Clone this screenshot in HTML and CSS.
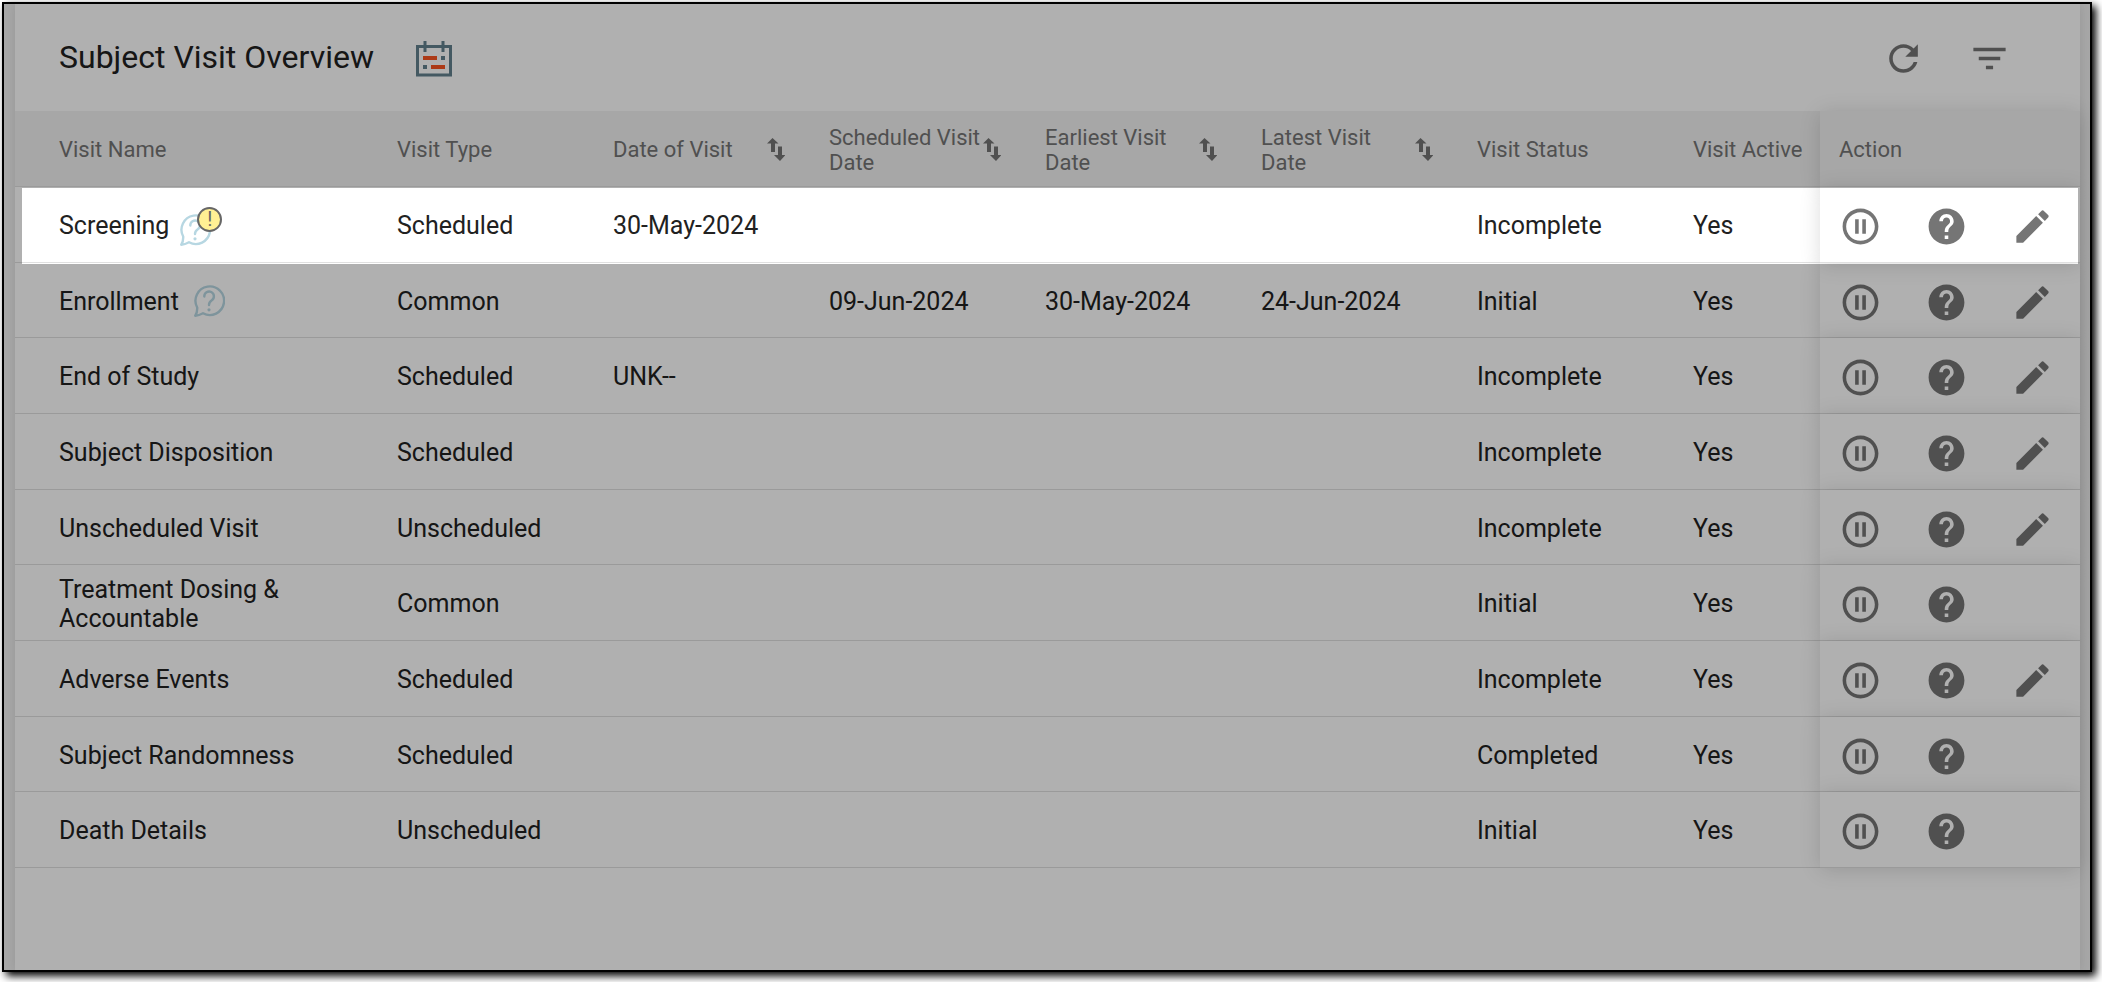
FILE: index.html
```html
<!DOCTYPE html>
<html lang="en">
<head>
    <meta charset="UTF-8">
    <meta name="viewport" content="width=device-width, initial-scale=1.0">
    <title>Subject Visit Overview</title>
    <link rel="stylesheet" href="styles.css">
</head>
<body>
    <!-- Shared icons -->
    <svg class="sprite" aria-hidden="true">
        <symbol id="icon-sort" viewBox="0 0 18 23"><path d="M5.500 0L0 5.500h4V14h4V5.500h3.500zM13 23l5.500-6H15V8.500h-4V17H7z"/></symbol>
        <symbol id="icon-pause" viewBox="0 0 24 24"><path d="M9 16h2V8H9v8zm3-14C6.48 2 2 6.48 2 12s4.48 10 10 10 10-4.48 10-10S17.52 2 12 2zm0 18c-4.41 0-8-3.59-8-8s3.59-8 8-8 8 3.59 8 8-3.59 8-8 8zm1-4h2V8h-2v8z"/></symbol>
        <symbol id="icon-help" viewBox="0 0 24 24"><path d="M12 2C6.48 2 2 6.48 2 12s4.48 10 10 10 10-4.48 10-10S17.52 2 12 2zm1 17h-2v-2h2v2zm2.07-7.75l-.9.92C13.45 12.9 13 13.5 13 15h-2v-.5c0-1.1.45-2.1 1.17-2.83l1.24-1.26c.37-.36.59-.86.59-1.41 0-1.1-.9-2-2-2s-2 .9-2 2H8c0-2.21 1.79-4 4-4s4 1.79 4 4c0 .88-.36 1.68-.93 2.25z"/></symbol>
        <symbol id="icon-edit" viewBox="0 0 24 24"><path d="M3 17.25V21h3.75L17.81 9.94l-3.75-3.75L3 17.25zM20.71 7.04c.39-.39.39-1.02 0-1.41l-2.34-2.34c-.39-.39-1.02-.39-1.41 0l-1.83 1.83 3.75 3.75 1.83-1.83z"/></symbol>
        <symbol id="icon-query" viewBox="0 0 32 32">
            <path d="M4.200 22.500Q4.500 27 2.300 30.700Q6 30.600 10 28.300A14.300 14.300 0 1 0 4.200 22.500Z" fill="none" stroke="#b7d7e2" stroke-width="2.400" stroke-linejoin="round"/>
            <path d="M11.300 11.500a4.800 4.800 0 1 1 7.500 3.800c-2 1.400-2.800 2.400-2.800 4.700" fill="none" stroke="#b7d7e2" stroke-width="2.400" stroke-linecap="round"/>
            <circle cx="16" cy="24.800" r="1.600" fill="#b7d7e2"/>
        </symbol>
    </svg>

    <main class="frame">
        <section class="panel">
            <header class="panel-header">
                <h1 class="title">Subject Visit Overview</h1>
                <button class="icon-btn" aria-label="Calendar">
                    <svg class="calendar" viewBox="0 0 36 36">
                        <path d="M1.500 5.500h33v28.500h-33z" fill="none" stroke="#63818f" stroke-width="3"/>
                        <path d="M9 0v11M27 0v11" stroke="#63818f" stroke-width="3"/>
                        <path d="M21 17H7M15 26h14" stroke="#fa5522" stroke-width="4"/>
                        <path d="M25 17h4M7 26h4" stroke="#63818f" stroke-width="4"/>
                    </svg>
                </button>
                <div class="tools">
                    <button class="icon-btn" aria-label="Refresh"><svg class="icon" viewBox="0 0 24 24"><path d="M17.65 6.35C16.2 4.9 14.21 4 12 4c-4.42 0-7.99 3.58-7.99 8s3.57 8 7.99 8c3.73 0 6.84-2.55 7.73-6h-2.08c-.82 2.33-3.04 4-5.65 4-3.31 0-6-2.69-6-6s2.69-6 6-6c1.66 0 3.14.69 4.22 1.78L13 11h7V4l-2.35 2.35z"/></svg></button>
                    <button class="icon-btn" aria-label="Filter"><svg class="icon" viewBox="0 0 24 24"><path d="M10 18h4v-2h-4v2zM3 6v2h18V6H3zm3 7h12v-2H6v2z"/></svg></button>
                </div>
            </header>

            <table class="visits">
                <colgroup>
                    <col class="col-name">
                    <col class="col-data" span="6">
                    <col class="col-active">
                    <col class="col-action">
                </colgroup>
                <thead>
                    <tr>
                        <th>Visit Name</th>
                        <th>Visit Type</th>
                        <th><div class="sortable"><span>Date of Visit</span><button class="icon-btn" aria-label="Sort by date of visit"><svg class="sort"><use href="#icon-sort"/></svg></button></div></th>
                        <th><div class="sortable"><span>Scheduled Visit Date</span><button class="icon-btn" aria-label="Sort by scheduled visit date"><svg class="sort"><use href="#icon-sort"/></svg></button></div></th>
                        <th><div class="sortable"><span>Earliest Visit Date</span><button class="icon-btn" aria-label="Sort by earliest visit date"><svg class="sort"><use href="#icon-sort"/></svg></button></div></th>
                        <th><div class="sortable"><span>Latest Visit Date</span><button class="icon-btn" aria-label="Sort by latest visit date"><svg class="sort"><use href="#icon-sort"/></svg></button></div></th>
                        <th>Visit Status</th>
                        <th>Visit Active</th>
                        <th class="action">Action</th>
                    </tr>
                </thead>
                <tbody id="visit-rows"></tbody>
            </table>
        </section>
    </main>

    <script src="script.js"></script>
</body>
</html>
```
FILE: styles.css
```css
* {
    margin: 0;
    padding: 0;
    box-sizing: border-box;
}

body {
    font-family: Roboto, sans-serif;
    background: #fff;
    color: #212121;
    padding: 2px 10px 10px 2px;
    height: 100vh;
    overflow: hidden;
}

.sprite {
    position: absolute;
    width: 0;
    height: 0;
}

.frame {
    height: 100%;
    padding: 0 10px 0 11px;
    border: 2px solid #000;
    background: #f2f2f2;
    box-shadow: 4px 4px 8px #000;
    overflow: hidden;
}

.panel {
    height: 100%;
    background: #fff;
    box-shadow: 0 0 10px rgba(0, 0, 0, 0.1);
}

/* Panel header */
.panel-header {
    display: flex;
    align-items: center;
    height: 107px;
    padding: 2px 69px 0 44px;
}

.title {
    font-size: 32px;
    font-weight: 400;
    line-height: 40px;
    padding-bottom: 4px;
    margin-right: 42px;
}

.icon-btn {
    display: block;
    flex: none;
    border: none;
    background: none;
    color: #757575;
    cursor: pointer;
}

.icon-btn svg {
    display: block;
    fill: currentColor;
}

.icon {
    width: 43px;
    height: 43px;
}

.calendar {
    width: 36px;
    height: 36px;
}

.tools {
    display: flex;
    gap: 43px;
    margin-left: auto;
}

/* Visit table */
.visits {
    width: 100%;
    table-layout: fixed;
    border-collapse: separate;
    border-spacing: 0;
}

.col-name {
    width: 382px;
}

.col-data {
    width: 216px;
}

.col-active {
    width: 127px;
}

.col-action {
    width: 260px;
}

th,
td {
    padding-top: 2px;
    border-bottom: 1px solid #e0e0e0;
    text-align: left;
    vertical-align: middle;
}

th:first-child,
td:first-child {
    padding-left: 44px;
}

th {
    height: 76px;
    background: #f2f2f2;
    color: #757575;
    font-size: 22px;
    font-weight: 400;
    line-height: 25px;
}

td {
    height: 76px;
    font-size: 25px;
    line-height: 29px;
}

tr:nth-child(3n + 2) td {
    height: 75px;
}

.sortable {
    display: flex;
    align-items: center;
    padding-right: 44px;
}

.sortable span {
    flex: 1;
}

.sort {
    width: 18px;
    height: 23px;
    overflow: visible;
}

.action {
    position: relative;
    padding-left: 19px;
    background: #fff;
    box-shadow: 0 2px 20px rgba(0, 0, 0, 0.14);
}

th.action {
    z-index: 1;
    background: #f2f2f2;
}

.actions {
    display: flex;
    gap: 43px;
    padding-top: 2px;
}

/* Query marker after a visit name */
.name {
    display: flex;
    align-items: center;
    gap: 14px;
}

.query {
    position: relative;
    height: 32px;
}

.query svg {
    display: block;
    width: 32px;
    height: 32px;
}

.query.alert {
    margin: 8px 0 0 -4px;
}

.badge {
    position: absolute;
    top: -7px;
    left: 18px;
    width: 25px;
    height: 25px;
    border: 2px solid #666;
    border-radius: 50%;
    background: #fff094;
    color: #666;
    font-size: 20px;
    line-height: 21px;
    text-align: center;
}

/* Spotlight: everything outside the row is dimmed */
.spotlight {
    position: relative;
    z-index: 2;
}

.spotlight::after {
    content: "";
    position: absolute;
    inset: 1px 2px -1px 7px;
    box-shadow: 0 0 0 9999px rgba(0, 0, 0, 0.31);
    pointer-events: none;
}
```
FILE: script.js
```javascript
const visits = [
    { name: 'Screening', type: 'Scheduled', date: '30-May-2024', status: 'Incomplete', query: 'alert', edit: true, spotlight: true },
    { name: 'Enrollment', type: 'Common', scheduled: '09-Jun-2024', earliest: '30-May-2024', latest: '24-Jun-2024', status: 'Initial', query: 'open', edit: true },
    { name: 'End of Study', type: 'Scheduled', date: 'UNK--', status: 'Incomplete', edit: true },
    { name: 'Subject Disposition', type: 'Scheduled', status: 'Incomplete', edit: true },
    { name: 'Unscheduled Visit', type: 'Unscheduled', status: 'Incomplete', edit: true },
    { name: 'Treatment Dosing & Accountable', type: 'Common', status: 'Initial' },
    { name: 'Adverse Events', type: 'Scheduled', status: 'Incomplete', edit: true },
    { name: 'Subject Randomness', type: 'Scheduled', status: 'Completed' },
    { name: 'Death Details', type: 'Unscheduled', status: 'Initial' }
];

function iconButton(icon, label) {
    return `<button class="icon-btn" aria-label="${label}"><svg class="icon"><use href="#icon-${icon}"/></svg></button>`;
}

function queryMark(query) {
    if (!query) return '';
    const badge = query === 'alert' ? '<span class="badge">!</span>' : '';
    return `<span class="query ${query}"><svg><use href="#icon-query"/></svg>${badge}</span>`;
}

// Build one table row per visit
document.getElementById('visit-rows').innerHTML = visits.map(v => `
    <tr class="${v.spotlight ? 'spotlight' : ''}">
        <td><div class="name"><span>${v.name.replace('&', '&amp;')}</span>${queryMark(v.query)}</div></td>
        <td>${v.type}</td>
        <td>${v.date || ''}</td>
        <td>${v.scheduled || ''}</td>
        <td>${v.earliest || ''}</td>
        <td>${v.latest || ''}</td>
        <td>${v.status}</td>
        <td>Yes</td>
        <td class="action"><div class="actions">
            ${iconButton('pause', 'Pause')}
            ${iconButton('help', 'Queries')}
            ${v.edit ? iconButton('edit', 'Edit') : ''}
        </div></td>
    </tr>`).join('');
```
